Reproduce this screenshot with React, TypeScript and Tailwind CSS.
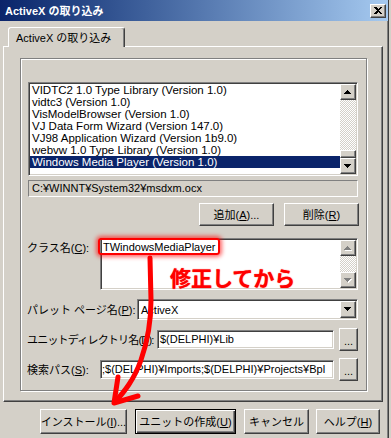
import React from 'react';

const raised =
  'border border-t-white border-l-white border-r-[#404040] border-b-[#404040] bg-[#d4d0c8] shadow-[inset_-1px_-1px_0_#808080]';
const sunken =
  'border border-t-[#808080] border-l-[#808080] border-r-white border-b-white p-px shadow-[inset_1px_1px_0_#404040,inset_-1px_-1px_0_#d4d0c8]';
const dither =
  'bg-[image:repeating-conic-gradient(#d4d0c8_0%_25%,#ffffff_0%_50%)] bg-[length:2px_2px]';

// Win2000 style 7x4 pixel triangle
function Tri({ dir, disabled }: { dir: 'up' | 'down'; disabled?: boolean }) {
  const rows = dir === 'up' ? [3, 2, 1, 0] : [0, 1, 2, 3];
  return (
    <svg width="8" height="5" shapeRendering="crispEdges">
      {disabled &&
        rows.map((x, y) => <rect key={'s' + y} x={x + 1} y={y + 1} width={7 - x * 2} height={1} fill="#fff" />)}
      {rows.map((x, y) => (
        <rect key={y} x={x} y={y} width={7 - x * 2} height={1} fill={disabled ? '#808080' : '#000'} />
      ))}
    </svg>
  );
}

function ScrollBtn({ dir, disabled }: { dir: 'up' | 'down'; disabled?: boolean }) {
  return (
    <div className={`flex h-[16px] w-[16px] shrink-0 items-center justify-center ${raised}`}>
      <Tri dir={dir} disabled={disabled} />
    </div>
  );
}

function Btn({ w, def, children }: { w: string; def?: boolean; children: React.ReactNode }) {
  const frame = def
    ? 'border border-black bg-[#d4d0c8] shadow-[inset_1px_1px_0_#fff,inset_-1px_-1px_0_#404040,inset_-2px_-2px_0_#808080]'
    : raised;
  return (
    <div className={`flex h-full shrink-0 items-center justify-center whitespace-nowrap ${w} ${frame}`}>
      {children}
    </div>
  );
}

function Dots() {
  return (
    <div className={`ml-[5px] flex h-[23px] w-[19px] items-end justify-center pb-[5px] leading-[8px] ${raised}`}>
      ...
    </div>
  );
}

const items = [
  'VIDTC2 1.0 Type Library (Version 1.0)',
  'vidtc3 (Version 1.0)',
  'VisModelBrowser (Version 1.0)',
  'VJ Data Form Wizard (Version 147.0)',
  'VJ98 Application Wizard (Version 1b9.0)',
  'webvw 1.0 Type Library (Version 1.0)',
  'Windows Media Player (Version 1.0)',
];

export default function App() {
  return (
    <div className="relative h-[438px] w-[391px] overflow-hidden bg-[#d4d0c8] font-['Liberation_Sans','Noto_Sans_CJK_JP',sans-serif] text-[11px] leading-[12px] text-black">
      <div className="h-full w-[389px] border-r border-r-[#404040] shadow-[inset_-1px_0_0_#808080]">
        {/* title bar */}
        <div className="flex h-[21px] w-[388px] items-center bg-gradient-to-r from-[#0a246a] to-[#a6caf0] pl-[5px] pr-[2px]">
          <span className="font-bold text-white">ActiveX の取り込み</span>
          <div className={`ml-auto flex h-[14px] w-[16px] items-center justify-center ${raised}`}>
            <svg width="8" height="7" shapeRendering="crispEdges">
              <path d="M0 0h2l2 2 2-2h2v1L5 3.5 8 6v1H6L4 5 2 7H0V6l3-2.5L0 1z" fill="#000" />
            </svg>
          </div>
        </div>

        <div className="pl-[3px] pt-[6px]">
          {/* tab */}
          <div className="relative z-10 -mb-px ml-[5px] flex h-[20px] w-[117px] items-center rounded-t-[3px] border-l border-r border-t border-l-white border-r-[#404040] border-t-white bg-[#d4d0c8] pl-[7px] shadow-[inset_-1px_0_0_#808080]">
            ActiveX の取り込み
          </div>

          {/* tab page */}
          <div className="h-[356px] w-[380px] border border-b-[#404040] border-l-white border-r-[#404040] border-t-white pl-[16px] pt-[11px] shadow-[inset_-1px_-1px_0_#808080]">
            <div className="h-[333px] w-[347px] border border-[#808080] pl-[6px] pt-[23px] shadow-[inset_1px_1px_0_#fff,1px_1px_0_#fff]">
              {/* list */}
              <div className={`ml-px flex h-[94px] w-[330px] bg-white ${sunken}`}>
                <div className="flex-1 overflow-hidden text-[11.5px]">
                  {items.map((t, i) => (
                    <div
                      key={t}
                      className={`h-[12px] whitespace-nowrap pl-[2px] ${i === items.length - 1 ? 'bg-[#0a246a] text-white' : ''}`}
                    >
                      {t}
                    </div>
                  ))}
                </div>
                <div className="flex w-[16px] flex-col">
                  <ScrollBtn dir="up" />
                  <div className={`flex flex-1 flex-col justify-end ${dither}`}>
                    <div className={`h-[8px] w-[16px] ${raised}`} />
                  </div>
                  <ScrollBtn dir="down" />
                </div>
              </div>

              <div className="ml-px mt-[4px] h-[17px] w-[330px] border border-b-white border-l-[#808080] border-r-white border-t-[#808080] pl-[3px] leading-[15px]">
                C:¥WINNT¥System32¥msdxm.ocx
              </div>

              <div className="mt-[6px] flex h-[23px] w-[332px] justify-end gap-[10px]">
                <Btn w="w-[75px]">
                  追加(<span className="underline">A</span>)...
                </Btn>
                <Btn w="w-[75px]">
                  削除(<span className="underline">R</span>)
                </Btn>
              </div>

              {/* class name */}
              <div className="mt-[12px] flex">
                <div className="w-[73px] pt-[4px]">
                  クラス名(<span className="underline">C</span>):
                </div>
                <div className={`relative flex h-[52px] w-[258px] bg-white ${sunken}`}>
                  <div className="flex-1 pl-px pt-px">TWindowsMediaPlayer</div>
                  <div className="flex w-[16px] flex-col">
                    <ScrollBtn dir="up" disabled />
                    <div className={`flex-1 ${dither}`} />
                    <ScrollBtn dir="down" disabled />
                  </div>
                  <div className="absolute left-[-3px] top-[-1px] h-[17px] w-[122px] rounded-[3px] border-2 border-[#ff0000] shadow-[0_0_4px_2px_rgba(255,0,0,0.6)]" />
                </div>
              </div>

              {/* palette page */}
              <div className="mt-[9px] flex h-[21px] items-center">
                <div className="w-[110px] whitespace-nowrap">
                  パレット ページ名(<span className="underline">P</span>):
                </div>
                <div className={`flex h-[21px] w-[221px] items-center bg-white ${sunken}`}>
                  <div className="flex-1 pl-[2px]">ActiveX</div>
                  <div className={`flex h-[17px] w-[16px] items-center justify-center ${raised}`}>
                    <Tri dir="down" />
                  </div>
                </div>
              </div>

              {/* unit dir */}
              <div className="mt-[8px] flex h-[23px] items-center">
                <div className="w-[130px] whitespace-nowrap tracking-[-0.8px]">
                  ユニットディレクトリ名(<span className="underline">D</span>):
                </div>
                <div className={`relative h-[19px] w-[177px] bg-white pl-[2px] leading-[15px] ${sunken}`}>
                  $(DELPHI)¥Lib
                </div>
                <Dots />
              </div>

              {/* search path */}
              <div className="mt-[7px] flex h-[23px] items-center">
                <div className="w-[73px] whitespace-nowrap">
                  検索パス(<span className="underline">S</span>):
                </div>
                <div className={`relative h-[19px] w-[234px] overflow-hidden whitespace-nowrap bg-white leading-[15px] ${sunken}`}>
                  ;$(DELPHI)¥Imports;$(DELPHI)¥Projects¥Bpl
                </div>
                <Dots />
              </div>
            </div>
          </div>

          {/* bottom buttons */}
          <div className="mt-[7px] flex h-[25px] pl-[37px]">
            <Btn w="w-[87px]">
              インストール(<span className="underline">I</span>)...
            </Btn>
            <div className="ml-[8px] h-full">
              <Btn w="w-[101px]" def>
                ユニットの作成(<span className="underline">U</span>)
              </Btn>
            </div>
            <div className="ml-[8px] h-full">
              <Btn w="w-[65px]">キャンセル</Btn>
            </div>
            <div className="ml-[7px] h-full">
              <Btn w="w-[64px]">
                ヘルプ(<span className="underline">H</span>)
              </Btn>
            </div>
          </div>
        </div>
      </div>

      {/* red annotation */}
      <div className="pointer-events-none absolute left-[170px] top-[265px] font-['Noto_Sans_CJK_JP',sans-serif] text-[21px] font-bold leading-[24px] text-[#ff0000] [text-shadow:0_0_1px_#ff0000]">
        修正してから
      </div>
      <svg className="pointer-events-none absolute left-0 top-0" width="391" height="438">
        <path
          d="M150 258 L151 300 C151 320 148 340 141 360 C134 380 124 392 115 402"
          fill="none"
          stroke="#ff0000"
          strokeWidth="5"
          strokeLinecap="round"
        />
        <path d="M118 377 L114 403 L138 396" fill="none" stroke="#ff0000" strokeWidth="5" strokeLinecap="round" strokeLinejoin="round" />
      </svg>
    </div>
  );
}
